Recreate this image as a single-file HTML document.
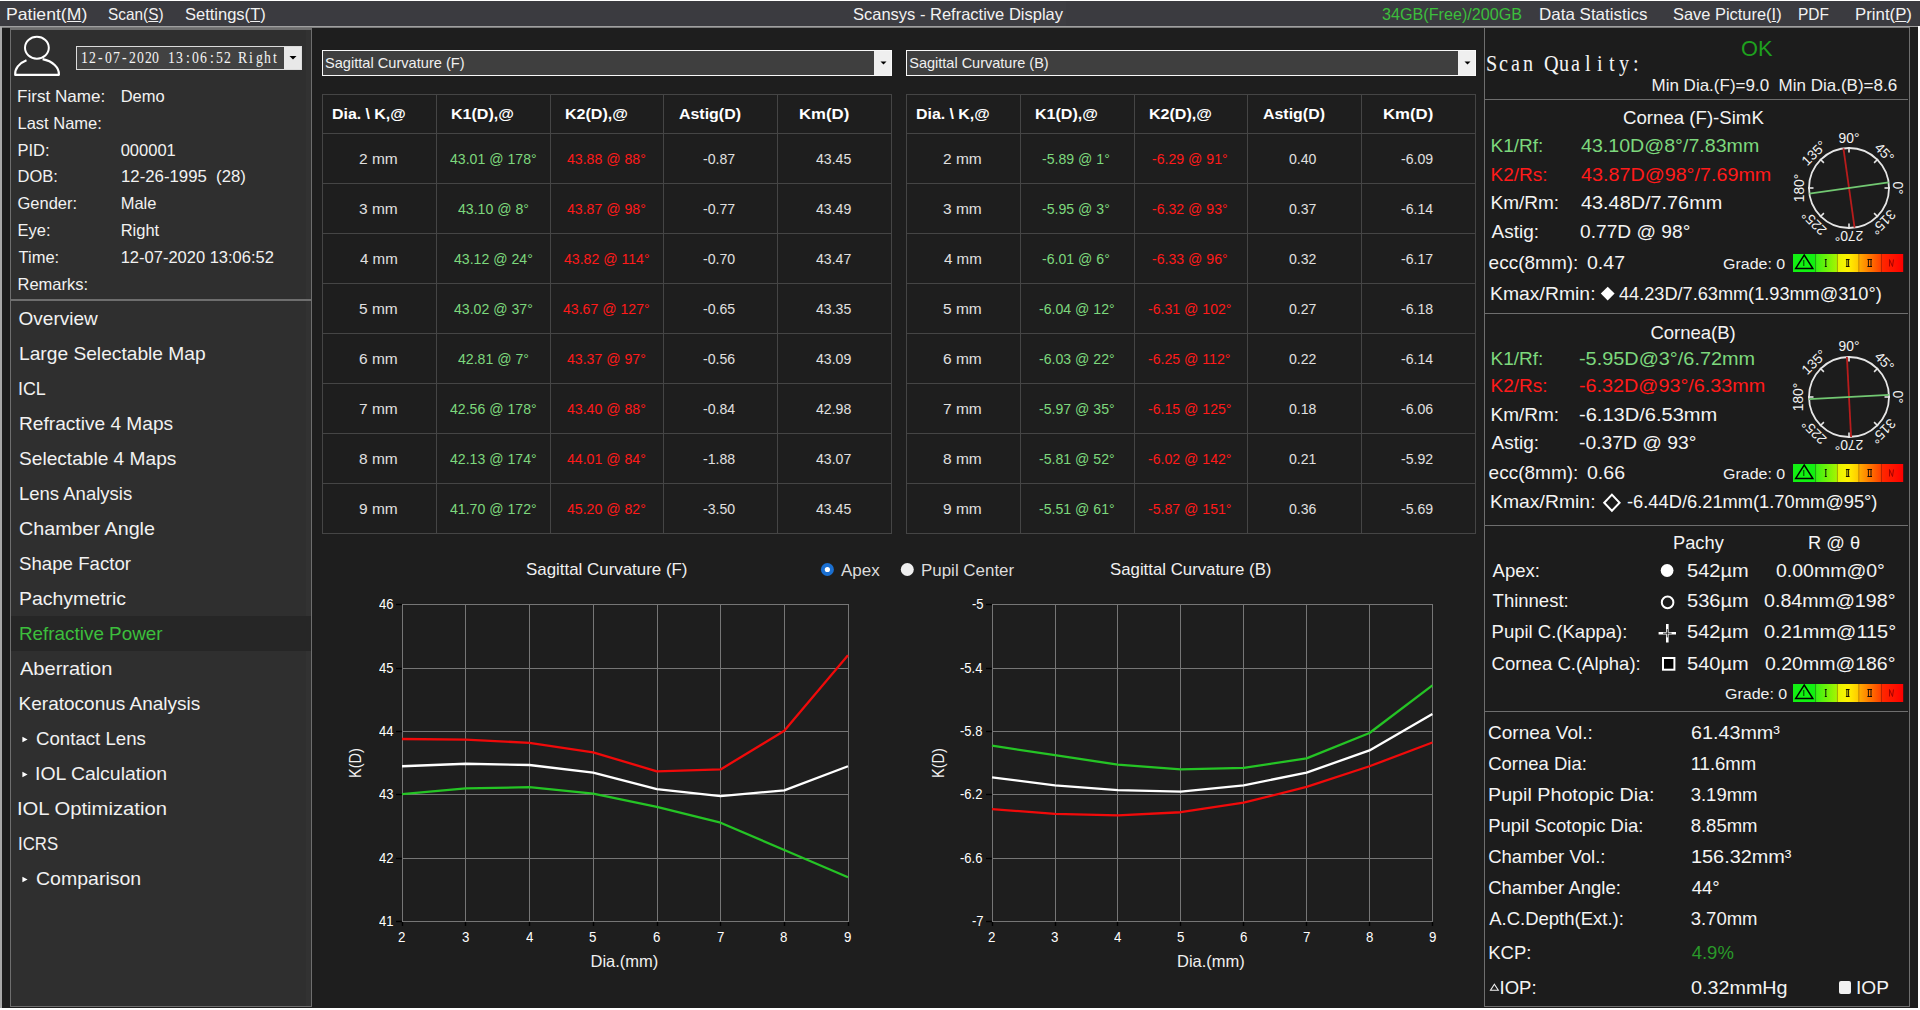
<!DOCTYPE html>
<html><head><meta charset="utf-8"><title>Scansys - Refractive Display</title>
<style>
html,body{margin:0;padding:0;}
body{width:1920px;height:1010px;position:relative;overflow:hidden;background:#ffffff;font-family:"Liberation Sans",sans-serif;}
.t{position:absolute;white-space:pre;}
svg{position:absolute;}
</style></head><body>
<div style="position:absolute;left:0px;top:0px;width:1920px;height:1010px;background:#ffffff;"></div><div style="position:absolute;left:0px;top:26px;width:1918px;height:982px;background:#a9a9a9;"></div><div style="position:absolute;left:2px;top:27px;width:1916px;height:981px;background:#1e1e1e;"></div><div style="position:absolute;left:0px;top:1px;width:1920px;height:25px;background:#3b3b40;"></div><div style="position:absolute;left:0px;top:26px;width:1918px;height:1px;background:#a0a0a0;"></div><div style="position:absolute;left:2px;top:27px;width:1908px;height:1px;background:#7a7a7a;"></div><div style="position:absolute;left:1918px;top:26px;width:2px;height:984px;background:#ffffff;"></div><div style="position:absolute;left:0px;top:1008px;width:1920px;height:2px;background:#ffffff;"></div><div style="position:absolute;left:850px;top:1px;width:216px;height:25px;background:#3d3d42;"></div><div style="position:absolute;left:10px;top:28px;width:302px;height:979px;background:#6e6e6e;"></div><div style="position:absolute;left:11px;top:30px;width:300px;height:976px;background:#2f2f2f;"></div><div style="position:absolute;left:306px;top:30px;width:5px;height:976px;background:#323232;"></div><div style="position:absolute;left:11px;top:299px;width:300px;height:2px;background:#6e6e6e;"></div><div style="position:absolute;left:11px;top:616px;width:300px;height:35px;background:#262626;"></div><svg style="left:0;top:0" width="80" height="90" viewBox="0 0 80 90">
<ellipse cx="36.9" cy="47.8" rx="11.9" ry="11" fill="none" stroke="#ffffff" stroke-width="2"/>
<path d="M26.5 60.3 A22.5 15.5 0 0 0 15.2 74.8 L58.9 74.8 A22.5 15.5 0 0 0 42.6 59.2" fill="none" stroke="#ffffff" stroke-width="2.2" stroke-linejoin="round"/>
</svg><div style="position:absolute;left:76px;top:46px;width:226px;height:24px;background:#dcdcdc;"></div><div style="position:absolute;left:77px;top:47px;width:207px;height:22px;background:#424242;"></div><div style="position:absolute;left:284px;top:47px;width:17px;height:22px;background:#e8e8e8;"></div><svg style="left:289px;top:55px" width="9" height="6"><path d="M0.5 1 L7.5 1 L4 4.5 Z" fill="#000"/></svg><svg style="left:22px;top:735.7px" width="7" height="8"><path d="M0.4 0.8 L5.6 3.5 L0.4 6.2 Z" fill="#ffffff"/></svg><svg style="left:22px;top:770.7px" width="7" height="8"><path d="M0.4 0.8 L5.6 3.5 L0.4 6.2 Z" fill="#ffffff"/></svg><svg style="left:22px;top:875.7px" width="7" height="8"><path d="M0.4 0.8 L5.6 3.5 L0.4 6.2 Z" fill="#ffffff"/></svg><div style="position:absolute;left:322px;top:50px;width:570px;height:26px;background:#f8f8f8;"></div><div style="position:absolute;left:323px;top:51px;width:568px;height:24px;background:#3f3f3f;"></div><div style="position:absolute;left:874px;top:51px;width:17px;height:24px;background:#efefef;"></div><svg style="left:880px;top:61px" width="8" height="5"><path d="M0.5 0.5 L6.5 0.5 L3.5 3.5 Z" fill="#000"/></svg><div style="position:absolute;left:906px;top:50px;width:570px;height:26px;background:#f8f8f8;"></div><div style="position:absolute;left:907px;top:51px;width:568px;height:24px;background:#3f3f3f;"></div><div style="position:absolute;left:1458px;top:51px;width:17px;height:24px;background:#efefef;"></div><svg style="left:1464px;top:61px" width="8" height="5"><path d="M0.5 0.5 L6.5 0.5 L3.5 3.5 Z" fill="#000"/></svg><svg style="left:0;top:0" width="1920" height="600"><line x1="322.5" y1="94" x2="322.5" y2="534" stroke="#454545" stroke-width="1"/><line x1="436.5" y1="94" x2="436.5" y2="534" stroke="#454545" stroke-width="1"/><line x1="550.5" y1="94" x2="550.5" y2="534" stroke="#454545" stroke-width="1"/><line x1="663.5" y1="94" x2="663.5" y2="534" stroke="#454545" stroke-width="1"/><line x1="777.5" y1="94" x2="777.5" y2="534" stroke="#454545" stroke-width="1"/><line x1="891.5" y1="94" x2="891.5" y2="534" stroke="#454545" stroke-width="1"/><line x1="322" y1="94.5" x2="892" y2="94.5" stroke="#454545" stroke-width="1"/><line x1="322" y1="133.5" x2="892" y2="133.5" stroke="#454545" stroke-width="1"/><line x1="322" y1="183.5" x2="892" y2="183.5" stroke="#454545" stroke-width="1"/><line x1="322" y1="233.5" x2="892" y2="233.5" stroke="#454545" stroke-width="1"/><line x1="322" y1="283.5" x2="892" y2="283.5" stroke="#454545" stroke-width="1"/><line x1="322" y1="333.5" x2="892" y2="333.5" stroke="#454545" stroke-width="1"/><line x1="322" y1="383.5" x2="892" y2="383.5" stroke="#454545" stroke-width="1"/><line x1="322" y1="433.5" x2="892" y2="433.5" stroke="#454545" stroke-width="1"/><line x1="322" y1="483.5" x2="892" y2="483.5" stroke="#454545" stroke-width="1"/><line x1="322" y1="533.5" x2="892" y2="533.5" stroke="#454545" stroke-width="1"/></svg><svg style="left:0;top:0" width="1920" height="600"><line x1="906.5" y1="94" x2="906.5" y2="534" stroke="#454545" stroke-width="1"/><line x1="1020.5" y1="94" x2="1020.5" y2="534" stroke="#454545" stroke-width="1"/><line x1="1134.5" y1="94" x2="1134.5" y2="534" stroke="#454545" stroke-width="1"/><line x1="1247.5" y1="94" x2="1247.5" y2="534" stroke="#454545" stroke-width="1"/><line x1="1361.5" y1="94" x2="1361.5" y2="534" stroke="#454545" stroke-width="1"/><line x1="1475.5" y1="94" x2="1475.5" y2="534" stroke="#454545" stroke-width="1"/><line x1="906" y1="94.5" x2="1476" y2="94.5" stroke="#454545" stroke-width="1"/><line x1="906" y1="133.5" x2="1476" y2="133.5" stroke="#454545" stroke-width="1"/><line x1="906" y1="183.5" x2="1476" y2="183.5" stroke="#454545" stroke-width="1"/><line x1="906" y1="233.5" x2="1476" y2="233.5" stroke="#454545" stroke-width="1"/><line x1="906" y1="283.5" x2="1476" y2="283.5" stroke="#454545" stroke-width="1"/><line x1="906" y1="333.5" x2="1476" y2="333.5" stroke="#454545" stroke-width="1"/><line x1="906" y1="383.5" x2="1476" y2="383.5" stroke="#454545" stroke-width="1"/><line x1="906" y1="433.5" x2="1476" y2="433.5" stroke="#454545" stroke-width="1"/><line x1="906" y1="483.5" x2="1476" y2="483.5" stroke="#454545" stroke-width="1"/><line x1="906" y1="533.5" x2="1476" y2="533.5" stroke="#454545" stroke-width="1"/></svg><svg style="left:0;top:0" width="1920" height="1010"><line x1="402.5" y1="604" x2="402.5" y2="922" stroke="#767676" stroke-width="1"/><line x1="402.5" y1="922" x2="402.5" y2="926" stroke="#000" stroke-width="1.4"/><line x1="465.5" y1="604" x2="465.5" y2="922" stroke="#767676" stroke-width="1"/><line x1="465.5" y1="922" x2="465.5" y2="926" stroke="#000" stroke-width="1.4"/><line x1="529.5" y1="604" x2="529.5" y2="922" stroke="#767676" stroke-width="1"/><line x1="529.5" y1="922" x2="529.5" y2="926" stroke="#000" stroke-width="1.4"/><line x1="593.5" y1="604" x2="593.5" y2="922" stroke="#767676" stroke-width="1"/><line x1="593.5" y1="922" x2="593.5" y2="926" stroke="#000" stroke-width="1.4"/><line x1="657.5" y1="604" x2="657.5" y2="922" stroke="#767676" stroke-width="1"/><line x1="657.5" y1="922" x2="657.5" y2="926" stroke="#000" stroke-width="1.4"/><line x1="720.5" y1="604" x2="720.5" y2="922" stroke="#767676" stroke-width="1"/><line x1="720.5" y1="922" x2="720.5" y2="926" stroke="#000" stroke-width="1.4"/><line x1="784.5" y1="604" x2="784.5" y2="922" stroke="#767676" stroke-width="1"/><line x1="784.5" y1="922" x2="784.5" y2="926" stroke="#000" stroke-width="1.4"/><line x1="848.5" y1="604" x2="848.5" y2="922" stroke="#767676" stroke-width="1"/><line x1="848.5" y1="922" x2="848.5" y2="926" stroke="#000" stroke-width="1.4"/><line x1="402" y1="604.5" x2="849" y2="604.5" stroke="#767676" stroke-width="1"/><line x1="396" y1="604.5" x2="402" y2="604.5" stroke="#000" stroke-width="1.4"/><line x1="402" y1="668.5" x2="849" y2="668.5" stroke="#767676" stroke-width="1"/><line x1="396" y1="668.5" x2="402" y2="668.5" stroke="#000" stroke-width="1.4"/><line x1="402" y1="731.5" x2="849" y2="731.5" stroke="#767676" stroke-width="1"/><line x1="396" y1="731.5" x2="402" y2="731.5" stroke="#000" stroke-width="1.4"/><line x1="402" y1="794.5" x2="849" y2="794.5" stroke="#767676" stroke-width="1"/><line x1="396" y1="794.5" x2="402" y2="794.5" stroke="#000" stroke-width="1.4"/><line x1="402" y1="858.5" x2="849" y2="858.5" stroke="#767676" stroke-width="1"/><line x1="396" y1="858.5" x2="402" y2="858.5" stroke="#000" stroke-width="1.4"/><line x1="402" y1="921.5" x2="849" y2="921.5" stroke="#767676" stroke-width="1"/><line x1="396" y1="921.5" x2="402" y2="921.5" stroke="#000" stroke-width="1.4"/><polyline points="402.00,739.01 465.71,739.64 529.43,742.81 593.14,752.32 656.86,771.34 720.57,769.44 784.29,730.77 848.00,655.32" fill="none" stroke="#f00a0a" stroke-width="2.3" stroke-linejoin="round"/><polyline points="402.00,766.27 465.71,763.73 529.43,765.00 593.14,772.61 656.86,789.09 720.57,796.07 784.29,790.36 848.00,766.27" fill="none" stroke="#ffffff" stroke-width="2.3" stroke-linejoin="round"/><polyline points="402.00,794.17 465.71,788.46 529.43,787.19 593.14,793.53 656.86,806.85 720.57,822.70 784.29,849.96 848.00,877.22" fill="none" stroke="#25c425" stroke-width="2.3" stroke-linejoin="round"/></svg><div class=t style="left:325px;top:753.7px;width:60px;height:18px;line-height:18px;text-align:center;font-size:16.5px;color:#f0f0f0;transform:rotate(-90deg) scaleX(0.88);transform-origin:50% 50%">K(D)</div><svg style="left:0;top:0" width="1920" height="1010"><line x1="992.5" y1="604" x2="992.5" y2="922" stroke="#767676" stroke-width="1"/><line x1="992.5" y1="922" x2="992.5" y2="926" stroke="#000" stroke-width="1.4"/><line x1="1055.5" y1="604" x2="1055.5" y2="922" stroke="#767676" stroke-width="1"/><line x1="1055.5" y1="922" x2="1055.5" y2="926" stroke="#000" stroke-width="1.4"/><line x1="1117.5" y1="604" x2="1117.5" y2="922" stroke="#767676" stroke-width="1"/><line x1="1117.5" y1="922" x2="1117.5" y2="926" stroke="#000" stroke-width="1.4"/><line x1="1180.5" y1="604" x2="1180.5" y2="922" stroke="#767676" stroke-width="1"/><line x1="1180.5" y1="922" x2="1180.5" y2="926" stroke="#000" stroke-width="1.4"/><line x1="1243.5" y1="604" x2="1243.5" y2="922" stroke="#767676" stroke-width="1"/><line x1="1243.5" y1="922" x2="1243.5" y2="926" stroke="#000" stroke-width="1.4"/><line x1="1306.5" y1="604" x2="1306.5" y2="922" stroke="#767676" stroke-width="1"/><line x1="1306.5" y1="922" x2="1306.5" y2="926" stroke="#000" stroke-width="1.4"/><line x1="1369.5" y1="604" x2="1369.5" y2="922" stroke="#767676" stroke-width="1"/><line x1="1369.5" y1="922" x2="1369.5" y2="926" stroke="#000" stroke-width="1.4"/><line x1="1432.5" y1="604" x2="1432.5" y2="922" stroke="#767676" stroke-width="1"/><line x1="1432.5" y1="922" x2="1432.5" y2="926" stroke="#000" stroke-width="1.4"/><line x1="992" y1="604.5" x2="1433" y2="604.5" stroke="#767676" stroke-width="1"/><line x1="986" y1="604.5" x2="992" y2="604.5" stroke="#000" stroke-width="1.4"/><line x1="992" y1="668.5" x2="1433" y2="668.5" stroke="#767676" stroke-width="1"/><line x1="986" y1="668.5" x2="992" y2="668.5" stroke="#000" stroke-width="1.4"/><line x1="992" y1="731.5" x2="1433" y2="731.5" stroke="#767676" stroke-width="1"/><line x1="986" y1="731.5" x2="992" y2="731.5" stroke="#000" stroke-width="1.4"/><line x1="992" y1="794.5" x2="1433" y2="794.5" stroke="#767676" stroke-width="1"/><line x1="986" y1="794.5" x2="992" y2="794.5" stroke="#000" stroke-width="1.4"/><line x1="992" y1="858.5" x2="1433" y2="858.5" stroke="#767676" stroke-width="1"/><line x1="986" y1="858.5" x2="992" y2="858.5" stroke="#000" stroke-width="1.4"/><line x1="992" y1="921.5" x2="1433" y2="921.5" stroke="#767676" stroke-width="1"/><line x1="986" y1="921.5" x2="992" y2="921.5" stroke="#000" stroke-width="1.4"/><polyline points="992.00,809.07 1054.91,813.82 1117.83,815.40 1180.74,812.23 1243.66,802.73 1306.57,786.88 1369.49,766.27 1432.40,742.50" fill="none" stroke="#f00a0a" stroke-width="2.3" stroke-linejoin="round"/><polyline points="992.00,777.37 1054.91,785.29 1117.83,790.05 1180.74,791.63 1243.66,785.29 1306.57,772.61 1369.49,750.42 1432.40,713.97" fill="none" stroke="#ffffff" stroke-width="2.3" stroke-linejoin="round"/><polyline points="992.00,745.66 1054.91,755.18 1117.83,764.68 1180.74,769.44 1243.66,767.86 1306.57,758.35 1369.49,732.98 1432.40,685.43" fill="none" stroke="#25c425" stroke-width="2.3" stroke-linejoin="round"/></svg><div class=t style="left:908px;top:753.7px;width:60px;height:18px;line-height:18px;text-align:center;font-size:16.5px;color:#f0f0f0;transform:rotate(-90deg) scaleX(0.88);transform-origin:50% 50%">K(D)</div><svg style="left:810px;top:555px" width="120" height="30">
<circle cx="17.4" cy="14.5" r="6.5" fill="#1a6fd1"/><circle cx="17.4" cy="14.5" r="2.6" fill="#ffffff"/>
<circle cx="97.3" cy="14.5" r="6.5" fill="#efefef"/>
</svg><div style="position:absolute;left:1484px;top:28px;width:426px;height:979px;background:#6e6e6e;"></div><div style="position:absolute;left:1485px;top:28px;width:424px;height:978px;background:#1c1c1c;"></div><div style="position:absolute;left:1485px;top:99px;width:423px;height:1px;background:#6e6e6e;"></div><div style="position:absolute;left:1485px;top:313px;width:423px;height:1px;background:#6e6e6e;"></div><div style="position:absolute;left:1485px;top:525px;width:423px;height:1px;background:#6e6e6e;"></div><div style="position:absolute;left:1485px;top:711px;width:423px;height:1px;background:#6e6e6e;"></div><svg style="left:1792px;top:254.1px" width="112" height="19" viewBox="0 0 112 19">
<defs>
<linearGradient id="g2_1" x1="0" x2="1"><stop offset="0" stop-color="#33f213"/><stop offset="1" stop-color="#a8f400"/></linearGradient>
<linearGradient id="g3_1" x1="0" x2="1"><stop offset="0" stop-color="#e4f500"/><stop offset="0.5" stop-color="#fff200"/><stop offset="1" stop-color="#ffc800"/></linearGradient>
<linearGradient id="g4_1" x1="0" x2="1"><stop offset="0" stop-color="#ffae00"/><stop offset="1" stop-color="#ff3d00"/></linearGradient>
<linearGradient id="g5_1" x1="0" x2="1"><stop offset="0" stop-color="#ff2a00"/><stop offset="1" stop-color="#ff0000"/></linearGradient>
</defs>
<rect x="1" y="0" width="22.6" height="18" fill="#12f012"/>
<rect x="23.6" y="0" width="21.8" height="18" fill="url(#g2_1)"/>
<rect x="45.4" y="0" width="21.5" height="18" fill="url(#g3_1)"/>
<rect x="66.9" y="0" width="22.5" height="18" fill="url(#g4_1)"/>
<rect x="89.4" y="0" width="21.8" height="18" fill="url(#g5_1)"/>
<line x1="23.6" y1="0" x2="23.6" y2="18" stroke="#2a8a10" stroke-width="0.6"/>
<line x1="45.4" y1="0" x2="45.4" y2="18" stroke="#a0a000" stroke-width="0.6"/>
<line x1="66.9" y1="0" x2="66.9" y2="18" stroke="#b07000" stroke-width="0.6"/>
<line x1="89.4" y1="0" x2="89.4" y2="18" stroke="#b02000" stroke-width="0.6"/>
<path d="M12.2 1 L20.9 14.5 L3.6 14.5 Z" fill="none" stroke="#000" stroke-width="1.4" stroke-linejoin="miter"/>
<path d="M11.8 6 L11.8 12" stroke="#000" stroke-width="0.8"/>
<path d="M33.8 5.5 L33.8 12.5 M32.8 5.5 L34.8 5.5 M32.8 12.5 L34.8 12.5" stroke="#000" stroke-width="0.9"/>
<path d="M54.9 5.5 L54.9 12.5 M56.6 5.5 L56.6 12.5 M53.9 5.5 L57.6 5.5 M53.9 12.5 L57.6 12.5" stroke="#000" stroke-width="0.9"/>
<path d="M76.4 5.5 L76.4 12.5 M79 5.5 L79 12.5 M75.4 5.5 L80 5.5 M75.4 12.5 L80 12.5" stroke="#000" stroke-width="0.9"/>
<path d="M97.5 5.5 L97.5 12.5 M97.5 5.5 L100.5 12.5 L101.5 5.5" stroke="#900" stroke-width="0.9" fill="none"/>
</svg><svg style="left:1786.6px;top:125.5px" width="124" height="124" viewBox="1786.6 125.5 124 124"><circle cx="1848.6" cy="187.5" r="40" fill="none" stroke="#e6e6e6" stroke-width="1.8"/><line x1="1884.10" y1="187.50" x2="1889.60" y2="187.50" stroke="#e6e6e6" stroke-width="1.6"/><text x="1896.90" y="187.50" transform="rotate(90 1896.90 187.50)" text-anchor="middle" dominant-baseline="central" font-family="Liberation Sans" font-size="13.8" fill="#f2f2f2">0°</text><line x1="1873.70" y1="162.40" x2="1877.59" y2="158.51" stroke="#e6e6e6" stroke-width="1.6"/><text x="1883.81" y="152.29" transform="rotate(45 1883.81 152.29)" text-anchor="middle" dominant-baseline="central" font-family="Liberation Sans" font-size="13.8" fill="#f2f2f2">45°</text><line x1="1848.60" y1="152.00" x2="1848.60" y2="146.50" stroke="#e6e6e6" stroke-width="1.6"/><text x="1848.60" y="137.50" transform="rotate(0 1848.60 137.50)" text-anchor="middle" dominant-baseline="central" font-family="Liberation Sans" font-size="13.8" fill="#f2f2f2">90°</text><line x1="1823.50" y1="162.40" x2="1819.61" y2="158.51" stroke="#e6e6e6" stroke-width="1.6"/><text x="1813.81" y="152.71" transform="rotate(-45 1813.81 152.71)" text-anchor="middle" dominant-baseline="central" font-family="Liberation Sans" font-size="13.8" fill="#f2f2f2">135°</text><line x1="1813.10" y1="187.50" x2="1807.60" y2="187.50" stroke="#e6e6e6" stroke-width="1.6"/><text x="1798.60" y="187.50" transform="rotate(-90 1798.60 187.50)" text-anchor="middle" dominant-baseline="central" font-family="Liberation Sans" font-size="13.8" fill="#f2f2f2">180°</text><line x1="1823.50" y1="212.60" x2="1819.61" y2="216.49" stroke="#e6e6e6" stroke-width="1.6"/><text x="1813.95" y="222.15" transform="rotate(-135 1813.95 222.15)" text-anchor="middle" dominant-baseline="central" font-family="Liberation Sans" font-size="13.8" fill="#f2f2f2">225°</text><line x1="1848.60" y1="223.00" x2="1848.60" y2="228.50" stroke="#e6e6e6" stroke-width="1.6"/><text x="1848.60" y="234.70" transform="rotate(-180 1848.60 234.70)" text-anchor="middle" dominant-baseline="central" font-family="Liberation Sans" font-size="13.8" fill="#f2f2f2">270°</text><line x1="1873.70" y1="212.60" x2="1877.59" y2="216.49" stroke="#e6e6e6" stroke-width="1.6"/><text x="1882.68" y="221.58" transform="rotate(-225 1882.68 221.58)" text-anchor="middle" dominant-baseline="central" font-family="Liberation Sans" font-size="13.8" fill="#f2f2f2">315°</text><line x1="1843.03" y1="147.89" x2="1854.17" y2="227.11" stroke="#b81c1c" stroke-width="1.8"/><line x1="1888.21" y1="181.93" x2="1808.99" y2="193.07" stroke="#72c872" stroke-width="1.8"/></svg><svg style="left:1600px;top:286px" width="16" height="16"><path d="M7.7 0.8 L14.6 7.6 L7.7 14.4 L0.8 7.6 Z" fill="#ffffff"/></svg><svg style="left:1792px;top:463.8px" width="112" height="19" viewBox="0 0 112 19">
<defs>
<linearGradient id="g2_2" x1="0" x2="1"><stop offset="0" stop-color="#33f213"/><stop offset="1" stop-color="#a8f400"/></linearGradient>
<linearGradient id="g3_2" x1="0" x2="1"><stop offset="0" stop-color="#e4f500"/><stop offset="0.5" stop-color="#fff200"/><stop offset="1" stop-color="#ffc800"/></linearGradient>
<linearGradient id="g4_2" x1="0" x2="1"><stop offset="0" stop-color="#ffae00"/><stop offset="1" stop-color="#ff3d00"/></linearGradient>
<linearGradient id="g5_2" x1="0" x2="1"><stop offset="0" stop-color="#ff2a00"/><stop offset="1" stop-color="#ff0000"/></linearGradient>
</defs>
<rect x="1" y="0" width="22.6" height="18" fill="#12f012"/>
<rect x="23.6" y="0" width="21.8" height="18" fill="url(#g2_2)"/>
<rect x="45.4" y="0" width="21.5" height="18" fill="url(#g3_2)"/>
<rect x="66.9" y="0" width="22.5" height="18" fill="url(#g4_2)"/>
<rect x="89.4" y="0" width="21.8" height="18" fill="url(#g5_2)"/>
<line x1="23.6" y1="0" x2="23.6" y2="18" stroke="#2a8a10" stroke-width="0.6"/>
<line x1="45.4" y1="0" x2="45.4" y2="18" stroke="#a0a000" stroke-width="0.6"/>
<line x1="66.9" y1="0" x2="66.9" y2="18" stroke="#b07000" stroke-width="0.6"/>
<line x1="89.4" y1="0" x2="89.4" y2="18" stroke="#b02000" stroke-width="0.6"/>
<path d="M12.2 1 L20.9 14.5 L3.6 14.5 Z" fill="none" stroke="#000" stroke-width="1.4" stroke-linejoin="miter"/>
<path d="M11.8 6 L11.8 12" stroke="#000" stroke-width="0.8"/>
<path d="M33.8 5.5 L33.8 12.5 M32.8 5.5 L34.8 5.5 M32.8 12.5 L34.8 12.5" stroke="#000" stroke-width="0.9"/>
<path d="M54.9 5.5 L54.9 12.5 M56.6 5.5 L56.6 12.5 M53.9 5.5 L57.6 5.5 M53.9 12.5 L57.6 12.5" stroke="#000" stroke-width="0.9"/>
<path d="M76.4 5.5 L76.4 12.5 M79 5.5 L79 12.5 M75.4 5.5 L80 5.5 M75.4 12.5 L80 12.5" stroke="#000" stroke-width="0.9"/>
<path d="M97.5 5.5 L97.5 12.5 M97.5 5.5 L100.5 12.5 L101.5 5.5" stroke="#900" stroke-width="0.9" fill="none"/>
</svg><svg style="left:1786.6px;top:334.7px" width="124" height="124" viewBox="1786.6 334.7 124 124"><circle cx="1848.6" cy="396.7" r="40" fill="none" stroke="#e6e6e6" stroke-width="1.8"/><line x1="1884.10" y1="396.70" x2="1889.60" y2="396.70" stroke="#e6e6e6" stroke-width="1.6"/><text x="1896.90" y="396.70" transform="rotate(90 1896.90 396.70)" text-anchor="middle" dominant-baseline="central" font-family="Liberation Sans" font-size="13.8" fill="#f2f2f2">0°</text><line x1="1873.70" y1="371.60" x2="1877.59" y2="367.71" stroke="#e6e6e6" stroke-width="1.6"/><text x="1883.81" y="361.49" transform="rotate(45 1883.81 361.49)" text-anchor="middle" dominant-baseline="central" font-family="Liberation Sans" font-size="13.8" fill="#f2f2f2">45°</text><line x1="1848.60" y1="361.20" x2="1848.60" y2="355.70" stroke="#e6e6e6" stroke-width="1.6"/><text x="1848.60" y="346.70" transform="rotate(0 1848.60 346.70)" text-anchor="middle" dominant-baseline="central" font-family="Liberation Sans" font-size="13.8" fill="#f2f2f2">90°</text><line x1="1823.50" y1="371.60" x2="1819.61" y2="367.71" stroke="#e6e6e6" stroke-width="1.6"/><text x="1813.81" y="361.91" transform="rotate(-45 1813.81 361.91)" text-anchor="middle" dominant-baseline="central" font-family="Liberation Sans" font-size="13.8" fill="#f2f2f2">135°</text><line x1="1813.10" y1="396.70" x2="1807.60" y2="396.70" stroke="#e6e6e6" stroke-width="1.6"/><text x="1798.60" y="396.70" transform="rotate(-90 1798.60 396.70)" text-anchor="middle" dominant-baseline="central" font-family="Liberation Sans" font-size="13.8" fill="#f2f2f2">180°</text><line x1="1823.50" y1="421.80" x2="1819.61" y2="425.69" stroke="#e6e6e6" stroke-width="1.6"/><text x="1813.95" y="431.35" transform="rotate(-135 1813.95 431.35)" text-anchor="middle" dominant-baseline="central" font-family="Liberation Sans" font-size="13.8" fill="#f2f2f2">225°</text><line x1="1848.60" y1="432.20" x2="1848.60" y2="437.70" stroke="#e6e6e6" stroke-width="1.6"/><text x="1848.60" y="443.90" transform="rotate(-180 1848.60 443.90)" text-anchor="middle" dominant-baseline="central" font-family="Liberation Sans" font-size="13.8" fill="#f2f2f2">270°</text><line x1="1873.70" y1="421.80" x2="1877.59" y2="425.69" stroke="#e6e6e6" stroke-width="1.6"/><text x="1882.68" y="430.78" transform="rotate(-225 1882.68 430.78)" text-anchor="middle" dominant-baseline="central" font-family="Liberation Sans" font-size="13.8" fill="#f2f2f2">315°</text><line x1="1846.51" y1="356.75" x2="1850.69" y2="436.65" stroke="#b81c1c" stroke-width="1.8"/><line x1="1888.55" y1="394.61" x2="1808.65" y2="398.79" stroke="#72c872" stroke-width="1.8"/></svg><svg style="left:1602px;top:493px" width="20" height="20"><path d="M9.9 1.6 L17.6 9.7 L9.9 17.8 L2.2 9.7 Z" fill="none" stroke="#ffffff" stroke-width="2"/></svg><svg style="left:1650px;top:555px" width="36" height="125" viewBox="1650 555 36 125">
<circle cx="1667.1" cy="570.5" r="6.4" fill="#ffffff"/>
<circle cx="1667.6" cy="602.4" r="5.8" fill="none" stroke="#ffffff" stroke-width="2"/>
<path d="M1658.6 633.2 L1676 633.2 M1667.3 624 L1667.3 642.4" stroke="#ffffff" stroke-width="2.6"/>
<path d="M1663 633.2 L1671.6 633.2 M1667.3 629 L1667.3 637.4" stroke="#000" stroke-width="0.8"/>
<rect x="1663" y="658" width="11.4" height="11.7" fill="#000" stroke="#ffffff" stroke-width="2"/>
</svg><svg style="left:1792px;top:684.0px" width="112" height="19" viewBox="0 0 112 19">
<defs>
<linearGradient id="g2_3" x1="0" x2="1"><stop offset="0" stop-color="#33f213"/><stop offset="1" stop-color="#a8f400"/></linearGradient>
<linearGradient id="g3_3" x1="0" x2="1"><stop offset="0" stop-color="#e4f500"/><stop offset="0.5" stop-color="#fff200"/><stop offset="1" stop-color="#ffc800"/></linearGradient>
<linearGradient id="g4_3" x1="0" x2="1"><stop offset="0" stop-color="#ffae00"/><stop offset="1" stop-color="#ff3d00"/></linearGradient>
<linearGradient id="g5_3" x1="0" x2="1"><stop offset="0" stop-color="#ff2a00"/><stop offset="1" stop-color="#ff0000"/></linearGradient>
</defs>
<rect x="1" y="0" width="22.6" height="18" fill="#12f012"/>
<rect x="23.6" y="0" width="21.8" height="18" fill="url(#g2_3)"/>
<rect x="45.4" y="0" width="21.5" height="18" fill="url(#g3_3)"/>
<rect x="66.9" y="0" width="22.5" height="18" fill="url(#g4_3)"/>
<rect x="89.4" y="0" width="21.8" height="18" fill="url(#g5_3)"/>
<line x1="23.6" y1="0" x2="23.6" y2="18" stroke="#2a8a10" stroke-width="0.6"/>
<line x1="45.4" y1="0" x2="45.4" y2="18" stroke="#a0a000" stroke-width="0.6"/>
<line x1="66.9" y1="0" x2="66.9" y2="18" stroke="#b07000" stroke-width="0.6"/>
<line x1="89.4" y1="0" x2="89.4" y2="18" stroke="#b02000" stroke-width="0.6"/>
<path d="M12.2 1 L20.9 14.5 L3.6 14.5 Z" fill="none" stroke="#000" stroke-width="1.4" stroke-linejoin="miter"/>
<path d="M11.8 6 L11.8 12" stroke="#000" stroke-width="0.8"/>
<path d="M33.8 5.5 L33.8 12.5 M32.8 5.5 L34.8 5.5 M32.8 12.5 L34.8 12.5" stroke="#000" stroke-width="0.9"/>
<path d="M54.9 5.5 L54.9 12.5 M56.6 5.5 L56.6 12.5 M53.9 5.5 L57.6 5.5 M53.9 12.5 L57.6 12.5" stroke="#000" stroke-width="0.9"/>
<path d="M76.4 5.5 L76.4 12.5 M79 5.5 L79 12.5 M75.4 5.5 L80 5.5 M75.4 12.5 L80 12.5" stroke="#000" stroke-width="0.9"/>
<path d="M97.5 5.5 L97.5 12.5 M97.5 5.5 L100.5 12.5 L101.5 5.5" stroke="#900" stroke-width="0.9" fill="none"/>
</svg><div style="position:absolute;left:1838.5px;top:981px;width:12.5px;height:13px;background:#f0f0f0;border-radius:2px;"></div><svg style="left:1489px;top:983px" width="11" height="9"><path d="M5.4 1.3 L9.3 7.3 L1.5 7.3 Z" fill="none" stroke="#f0f0f0" stroke-width="1.1"/></svg>
<div class=t style="left:6.43px;top:5.78px;font-size:16.5px;line-height:16.5px;color:#f2f2f2;transform:scaleX(1.0676);transform-origin:left 0;">Patient(<u>M</u>)</div>
<div class=t style="left:108.07px;top:5.78px;font-size:16.5px;line-height:16.5px;color:#f2f2f2;transform:scaleX(0.9310);transform-origin:left 0;">Scan(<u>S</u>)</div>
<div class=t style="left:185.00px;top:5.78px;font-size:16.5px;line-height:16.5px;color:#f2f2f2;">Settings(<u>T</u>)</div>
<div class=t style="left:853.00px;top:5.78px;font-size:16.5px;line-height:16.5px;color:#f2f2f2;">Scansys - Refractive Display</div>
<div class=t style="left:1382.32px;top:5.78px;font-size:16.5px;line-height:16.5px;color:#3cbf3c;transform:scaleX(0.9787);transform-origin:left 0;">34GB(Free)/200GB</div>
<div class=t style="left:1539.17px;top:5.78px;font-size:16.5px;line-height:16.5px;color:#f2f2f2;transform:scaleX(1.0288);transform-origin:left 0;">Data Statistics</div>
<div class=t style="left:1672.50px;top:5.78px;font-size:16.5px;line-height:16.5px;color:#f2f2f2;transform:scaleX(0.9953);transform-origin:left 0;">Save Picture(<u>I</u>)</div>
<div class=t style="left:1798.06px;top:5.78px;font-size:16.5px;line-height:16.5px;color:#f2f2f2;transform:scaleX(0.9375);transform-origin:left 0;">PDF</div>
<div class=t style="left:1854.78px;top:5.78px;font-size:16.5px;line-height:16.5px;color:#f2f2f2;transform:scaleX(1.0185);transform-origin:left 0;">Print(<u>P</u>)</div>
<div class=t style="left:81.06px;top:50.06px;font-size:16.8px;line-height:16.8px;color:#f4f4f4;font-family:'Liberation Serif',serif;transform:scaleX(0.8200);transform-origin:left 0;">1</div>
<div class=t style="left:88.99px;top:50.06px;font-size:16.8px;line-height:16.8px;color:#f4f4f4;font-family:'Liberation Serif',serif;transform:scaleX(0.8200);transform-origin:left 0;">2</div>
<div class=t style="left:98.15px;top:50.06px;font-size:16.8px;line-height:16.8px;color:#f4f4f4;font-family:'Liberation Serif',serif;transform:scaleX(0.8200);transform-origin:left 0;">-</div>
<div class=t style="left:104.85px;top:50.06px;font-size:16.8px;line-height:16.8px;color:#f4f4f4;font-family:'Liberation Serif',serif;transform:scaleX(0.8200);transform-origin:left 0;">0</div>
<div class=t style="left:112.78px;top:50.06px;font-size:16.8px;line-height:16.8px;color:#f4f4f4;font-family:'Liberation Serif',serif;transform:scaleX(0.8200);transform-origin:left 0;">7</div>
<div class=t style="left:121.94px;top:50.06px;font-size:16.8px;line-height:16.8px;color:#f4f4f4;font-family:'Liberation Serif',serif;transform:scaleX(0.8200);transform-origin:left 0;">-</div>
<div class=t style="left:128.64px;top:50.06px;font-size:16.8px;line-height:16.8px;color:#f4f4f4;font-family:'Liberation Serif',serif;transform:scaleX(0.8200);transform-origin:left 0;">2</div>
<div class=t style="left:136.57px;top:50.06px;font-size:16.8px;line-height:16.8px;color:#f4f4f4;font-family:'Liberation Serif',serif;transform:scaleX(0.8200);transform-origin:left 0;">0</div>
<div class=t style="left:144.50px;top:50.06px;font-size:16.8px;line-height:16.8px;color:#f4f4f4;font-family:'Liberation Serif',serif;transform:scaleX(0.8200);transform-origin:left 0;">2</div>
<div class=t style="left:152.43px;top:50.06px;font-size:16.8px;line-height:16.8px;color:#f4f4f4;font-family:'Liberation Serif',serif;transform:scaleX(0.8200);transform-origin:left 0;">0</div>
<div class=t style="left:168.29px;top:50.06px;font-size:16.8px;line-height:16.8px;color:#f4f4f4;font-family:'Liberation Serif',serif;transform:scaleX(0.8200);transform-origin:left 0;">1</div>
<div class=t style="left:176.22px;top:50.06px;font-size:16.8px;line-height:16.8px;color:#f4f4f4;font-family:'Liberation Serif',serif;transform:scaleX(0.8200);transform-origin:left 0;">3</div>
<div class=t style="left:186.20px;top:50.06px;font-size:16.8px;line-height:16.8px;color:#f4f4f4;font-family:'Liberation Serif',serif;transform:scaleX(0.8200);transform-origin:left 0;">:</div>
<div class=t style="left:192.08px;top:50.06px;font-size:16.8px;line-height:16.8px;color:#f4f4f4;font-family:'Liberation Serif',serif;transform:scaleX(0.8200);transform-origin:left 0;">0</div>
<div class=t style="left:200.01px;top:50.06px;font-size:16.8px;line-height:16.8px;color:#f4f4f4;font-family:'Liberation Serif',serif;transform:scaleX(0.8200);transform-origin:left 0;">6</div>
<div class=t style="left:209.99px;top:50.06px;font-size:16.8px;line-height:16.8px;color:#f4f4f4;font-family:'Liberation Serif',serif;transform:scaleX(0.8200);transform-origin:left 0;">:</div>
<div class=t style="left:215.87px;top:50.06px;font-size:16.8px;line-height:16.8px;color:#f4f4f4;font-family:'Liberation Serif',serif;transform:scaleX(0.8200);transform-origin:left 0;">5</div>
<div class=t style="left:223.80px;top:50.06px;font-size:16.8px;line-height:16.8px;color:#f4f4f4;font-family:'Liberation Serif',serif;transform:scaleX(0.8200);transform-origin:left 0;">2</div>
<div class=t style="left:238.43px;top:50.06px;font-size:16.8px;line-height:16.8px;color:#f4f4f4;font-family:'Liberation Serif',serif;transform:scaleX(0.8200);transform-origin:left 0;">R</div>
<div class=t style="left:249.23px;top:50.06px;font-size:16.8px;line-height:16.8px;color:#f4f4f4;font-family:'Liberation Serif',serif;transform:scaleX(0.8200);transform-origin:left 0;">i</div>
<div class=t style="left:255.52px;top:50.06px;font-size:16.8px;line-height:16.8px;color:#f4f4f4;font-family:'Liberation Serif',serif;transform:scaleX(0.8200);transform-origin:left 0;">g</div>
<div class=t style="left:263.86px;top:50.06px;font-size:16.8px;line-height:16.8px;color:#f4f4f4;font-family:'Liberation Serif',serif;transform:scaleX(0.8200);transform-origin:left 0;">h</div>
<div class=t style="left:273.02px;top:50.06px;font-size:16.8px;line-height:16.8px;color:#f4f4f4;font-family:'Liberation Serif',serif;transform:scaleX(0.8200);transform-origin:left 0;">t</div>
<div class=t style="left:17.46px;top:87.77px;font-size:16.5px;line-height:16.5px;color:#f2f2f2;transform:scaleX(1.0361);transform-origin:left 0;">First Name:</div>
<div class=t style="left:120.70px;top:87.77px;font-size:16.5px;line-height:16.5px;color:#f2f2f2;">Demo</div>
<div class=t style="left:17.50px;top:114.67px;font-size:16.5px;line-height:16.5px;color:#f2f2f2;">Last Name:</div>
<div class=t style="left:17.50px;top:141.57px;font-size:16.5px;line-height:16.5px;color:#f2f2f2;">PID:</div>
<div class=t style="left:120.70px;top:141.57px;font-size:16.5px;line-height:16.5px;color:#f2f2f2;">000001</div>
<div class=t style="left:17.50px;top:168.47px;font-size:16.5px;line-height:16.5px;color:#f2f2f2;">DOB:</div>
<div class=t style="left:120.68px;top:168.47px;font-size:16.5px;line-height:16.5px;color:#f2f2f2;transform:scaleX(1.0165);transform-origin:left 0;">12-26-1995  (28)</div>
<div class=t style="left:17.50px;top:195.37px;font-size:16.5px;line-height:16.5px;color:#f2f2f2;">Gender:</div>
<div class=t style="left:120.70px;top:195.37px;font-size:16.5px;line-height:16.5px;color:#f2f2f2;">Male</div>
<div class=t style="left:17.50px;top:222.28px;font-size:16.5px;line-height:16.5px;color:#f2f2f2;">Eye:</div>
<div class=t style="left:120.70px;top:222.28px;font-size:16.5px;line-height:16.5px;color:#f2f2f2;">Right</div>
<div class=t style="left:18.50px;top:249.17px;font-size:16.5px;line-height:16.5px;color:#f2f2f2;">Time:</div>
<div class=t style="left:120.70px;top:249.17px;font-size:16.5px;line-height:16.5px;color:#f2f2f2;">12-07-2020 13:06:52</div>
<div class=t style="left:17.50px;top:276.07px;font-size:16.5px;line-height:16.5px;color:#f2f2f2;">Remarks:</div>
<div class=t style="left:18.60px;top:308.55px;font-size:19px;line-height:19px;color:#f2f2f2;">Overview</div>
<div class=t style="left:18.59px;top:343.55px;font-size:19px;line-height:19px;color:#f2f2f2;transform:scaleX(1.0098);transform-origin:left 0;">Large Selectable Map</div>
<div class=t style="left:17.72px;top:378.55px;font-size:19px;line-height:19px;color:#f2f2f2;transform:scaleX(0.9407);transform-origin:left 0;">ICL</div>
<div class=t style="left:18.59px;top:413.55px;font-size:19px;line-height:19px;color:#f2f2f2;transform:scaleX(1.0066);transform-origin:left 0;">Refractive 4 Maps</div>
<div class=t style="left:18.59px;top:448.55px;font-size:19px;line-height:19px;color:#f2f2f2;transform:scaleX(1.0065);transform-origin:left 0;">Selectable 4 Maps</div>
<div class=t style="left:18.63px;top:483.55px;font-size:19px;line-height:19px;color:#f2f2f2;transform:scaleX(0.9739);transform-origin:left 0;">Lens Analysis</div>
<div class=t style="left:18.56px;top:518.55px;font-size:19px;line-height:19px;color:#f2f2f2;transform:scaleX(1.0380);transform-origin:left 0;">Chamber Angle</div>
<div class=t style="left:18.62px;top:553.55px;font-size:19px;line-height:19px;color:#f2f2f2;transform:scaleX(0.9823);transform-origin:left 0;">Shape Factor</div>
<div class=t style="left:18.58px;top:588.55px;font-size:19px;line-height:19px;color:#f2f2f2;transform:scaleX(1.0243);transform-origin:left 0;">Pachymetric</div>
<div class=t style="left:18.61px;top:623.55px;font-size:19px;line-height:19px;color:#3cbf3c;transform:scaleX(0.9923);transform-origin:left 0;">Refractive Power</div>
<div class=t style="left:19.60px;top:658.55px;font-size:19px;line-height:19px;color:#f2f2f2;transform:scaleX(1.0540);transform-origin:left 0;">Aberration</div>
<div class=t style="left:18.60px;top:693.55px;font-size:19px;line-height:19px;color:#f2f2f2;">Keratoconus Analysis</div>
<div class=t style="left:35.62px;top:728.55px;font-size:19px;line-height:19px;color:#f2f2f2;transform:scaleX(0.9820);transform-origin:left 0;">Contact Lens</div>
<div class=t style="left:34.56px;top:763.55px;font-size:19px;line-height:19px;color:#f2f2f2;transform:scaleX(1.0222);transform-origin:left 0;">IOL Calculation</div>
<div class=t style="left:17.47px;top:798.55px;font-size:19px;line-height:19px;color:#f2f2f2;transform:scaleX(1.0652);transform-origin:left 0;">IOL Optimization</div>
<div class=t style="left:17.83px;top:833.55px;font-size:19px;line-height:19px;color:#f2f2f2;transform:scaleX(0.8837);transform-origin:left 0;">ICRS</div>
<div class=t style="left:35.57px;top:868.55px;font-size:19px;line-height:19px;color:#f2f2f2;transform:scaleX(1.0270);transform-origin:left 0;">Comparison</div>
<div class=t style="left:325.24px;top:56.08px;font-size:14.5px;line-height:14.5px;color:#f0f0f0;transform:scaleX(1.0073);transform-origin:left 0;">Sagittal Curvature (F)</div>
<div class=t style="left:909.25px;top:56.08px;font-size:14.5px;line-height:14.5px;color:#f0f0f0;">Sagittal Curvature (B)</div>
<div class=t style="left:331.94px;top:106.25px;font-size:15px;line-height:15px;color:#ffffff;font-weight:700;transform:scaleX(1.0588);transform-origin:left 0;">Dia. \ K,@</div>
<div class=t style="left:450.93px;top:106.25px;font-size:15px;line-height:15px;color:#ffffff;font-weight:700;transform:scaleX(1.0702);transform-origin:left 0;">K1(D),@</div>
<div class=t style="left:564.93px;top:106.25px;font-size:15px;line-height:15px;color:#ffffff;font-weight:700;transform:scaleX(1.0702);transform-origin:left 0;">K2(D),@</div>
<div class=t style="left:679.00px;top:106.25px;font-size:15px;line-height:15px;color:#ffffff;font-weight:700;transform:scaleX(1.0621);transform-origin:left 0;">Astig(D)</div>
<div class=t style="left:798.88px;top:106.25px;font-size:15px;line-height:15px;color:#ffffff;font-weight:700;transform:scaleX(1.1163);transform-origin:left 0;">Km(D)</div>
<div class=t style="left:359.00px;top:150.92px;font-size:15.5px;line-height:15.5px;color:#e0e0e0;">2 mm</div>
<div class=t style="left:450.03px;top:150.92px;font-size:15.5px;line-height:15.5px;color:#7dd87d;transform:scaleX(0.9100);transform-origin:left 0;">43.01 @ 178°</div>
<div class=t style="left:567.07px;top:150.92px;font-size:15.5px;line-height:15.5px;color:#ff1a1a;transform:scaleX(0.9100);transform-origin:left 0;">43.88 @ 88°</div>
<div class=t style="left:703.27px;top:150.92px;font-size:15.5px;line-height:15.5px;color:#e0e0e0;transform:scaleX(0.9100);transform-origin:left 0;">-0.87</div>
<div class=t style="left:816.16px;top:150.92px;font-size:15.5px;line-height:15.5px;color:#e0e0e0;transform:scaleX(0.9100);transform-origin:left 0;">43.45</div>
<div class=t style="left:359.00px;top:200.92px;font-size:15.5px;line-height:15.5px;color:#e0e0e0;">3 mm</div>
<div class=t style="left:457.76px;top:200.92px;font-size:15.5px;line-height:15.5px;color:#7dd87d;transform:scaleX(0.9100);transform-origin:left 0;">43.10 @ 8°</div>
<div class=t style="left:567.07px;top:200.92px;font-size:15.5px;line-height:15.5px;color:#ff1a1a;transform:scaleX(0.9100);transform-origin:left 0;">43.87 @ 98°</div>
<div class=t style="left:703.27px;top:200.92px;font-size:15.5px;line-height:15.5px;color:#e0e0e0;transform:scaleX(0.9100);transform-origin:left 0;">-0.77</div>
<div class=t style="left:816.16px;top:200.92px;font-size:15.5px;line-height:15.5px;color:#e0e0e0;transform:scaleX(0.9100);transform-origin:left 0;">43.49</div>
<div class=t style="left:360.00px;top:250.93px;font-size:15.5px;line-height:15.5px;color:#e0e0e0;transform:scaleX(0.9737);transform-origin:left 0;">4 mm</div>
<div class=t style="left:453.67px;top:250.93px;font-size:15.5px;line-height:15.5px;color:#7dd87d;transform:scaleX(0.9100);transform-origin:left 0;">43.12 @ 24°</div>
<div class=t style="left:563.88px;top:250.93px;font-size:15.5px;line-height:15.5px;color:#ff1a1a;transform:scaleX(0.9100);transform-origin:left 0;">43.82 @ 114°</div>
<div class=t style="left:703.27px;top:250.93px;font-size:15.5px;line-height:15.5px;color:#e0e0e0;transform:scaleX(0.9100);transform-origin:left 0;">-0.70</div>
<div class=t style="left:816.16px;top:250.93px;font-size:15.5px;line-height:15.5px;color:#e0e0e0;transform:scaleX(0.9100);transform-origin:left 0;">43.47</div>
<div class=t style="left:359.00px;top:300.93px;font-size:15.5px;line-height:15.5px;color:#e0e0e0;">5 mm</div>
<div class=t style="left:453.67px;top:300.93px;font-size:15.5px;line-height:15.5px;color:#7dd87d;transform:scaleX(0.9100);transform-origin:left 0;">43.02 @ 37°</div>
<div class=t style="left:563.43px;top:300.93px;font-size:15.5px;line-height:15.5px;color:#ff1a1a;transform:scaleX(0.9100);transform-origin:left 0;">43.67 @ 127°</div>
<div class=t style="left:703.27px;top:300.93px;font-size:15.5px;line-height:15.5px;color:#e0e0e0;transform:scaleX(0.9100);transform-origin:left 0;">-0.65</div>
<div class=t style="left:816.16px;top:300.93px;font-size:15.5px;line-height:15.5px;color:#e0e0e0;transform:scaleX(0.9100);transform-origin:left 0;">43.35</div>
<div class=t style="left:359.00px;top:350.93px;font-size:15.5px;line-height:15.5px;color:#e0e0e0;">6 mm</div>
<div class=t style="left:457.76px;top:350.93px;font-size:15.5px;line-height:15.5px;color:#7dd87d;transform:scaleX(0.9100);transform-origin:left 0;">42.81 @ 7°</div>
<div class=t style="left:567.07px;top:350.93px;font-size:15.5px;line-height:15.5px;color:#ff1a1a;transform:scaleX(0.9100);transform-origin:left 0;">43.37 @ 97°</div>
<div class=t style="left:703.27px;top:350.93px;font-size:15.5px;line-height:15.5px;color:#e0e0e0;transform:scaleX(0.9100);transform-origin:left 0;">-0.56</div>
<div class=t style="left:816.16px;top:350.93px;font-size:15.5px;line-height:15.5px;color:#e0e0e0;transform:scaleX(0.9100);transform-origin:left 0;">43.09</div>
<div class=t style="left:359.00px;top:400.93px;font-size:15.5px;line-height:15.5px;color:#e0e0e0;">7 mm</div>
<div class=t style="left:450.03px;top:400.93px;font-size:15.5px;line-height:15.5px;color:#7dd87d;transform:scaleX(0.9100);transform-origin:left 0;">42.56 @ 178°</div>
<div class=t style="left:567.07px;top:400.93px;font-size:15.5px;line-height:15.5px;color:#ff1a1a;transform:scaleX(0.9100);transform-origin:left 0;">43.40 @ 88°</div>
<div class=t style="left:703.27px;top:400.93px;font-size:15.5px;line-height:15.5px;color:#e0e0e0;transform:scaleX(0.9100);transform-origin:left 0;">-0.84</div>
<div class=t style="left:816.16px;top:400.93px;font-size:15.5px;line-height:15.5px;color:#e0e0e0;transform:scaleX(0.9100);transform-origin:left 0;">42.98</div>
<div class=t style="left:359.00px;top:450.93px;font-size:15.5px;line-height:15.5px;color:#e0e0e0;">8 mm</div>
<div class=t style="left:450.03px;top:450.93px;font-size:15.5px;line-height:15.5px;color:#7dd87d;transform:scaleX(0.9100);transform-origin:left 0;">42.13 @ 174°</div>
<div class=t style="left:567.07px;top:450.93px;font-size:15.5px;line-height:15.5px;color:#ff1a1a;transform:scaleX(0.9100);transform-origin:left 0;">44.01 @ 84°</div>
<div class=t style="left:703.27px;top:450.93px;font-size:15.5px;line-height:15.5px;color:#e0e0e0;transform:scaleX(0.9100);transform-origin:left 0;">-1.88</div>
<div class=t style="left:816.16px;top:450.93px;font-size:15.5px;line-height:15.5px;color:#e0e0e0;transform:scaleX(0.9100);transform-origin:left 0;">43.07</div>
<div class=t style="left:359.00px;top:500.93px;font-size:15.5px;line-height:15.5px;color:#e0e0e0;">9 mm</div>
<div class=t style="left:450.03px;top:500.93px;font-size:15.5px;line-height:15.5px;color:#7dd87d;transform:scaleX(0.9100);transform-origin:left 0;">41.70 @ 172°</div>
<div class=t style="left:567.07px;top:500.93px;font-size:15.5px;line-height:15.5px;color:#ff1a1a;transform:scaleX(0.9100);transform-origin:left 0;">45.20 @ 82°</div>
<div class=t style="left:703.27px;top:500.93px;font-size:15.5px;line-height:15.5px;color:#e0e0e0;transform:scaleX(0.9100);transform-origin:left 0;">-3.50</div>
<div class=t style="left:816.16px;top:500.93px;font-size:15.5px;line-height:15.5px;color:#e0e0e0;transform:scaleX(0.9100);transform-origin:left 0;">43.45</div>
<div class=t style="left:916.44px;top:106.25px;font-size:15px;line-height:15px;color:#ffffff;font-weight:700;transform:scaleX(1.0588);transform-origin:left 0;">Dia. \ K,@</div>
<div class=t style="left:1034.93px;top:106.25px;font-size:15px;line-height:15px;color:#ffffff;font-weight:700;transform:scaleX(1.0702);transform-origin:left 0;">K1(D),@</div>
<div class=t style="left:1148.93px;top:106.25px;font-size:15px;line-height:15px;color:#ffffff;font-weight:700;transform:scaleX(1.0702);transform-origin:left 0;">K2(D),@</div>
<div class=t style="left:1263.00px;top:106.25px;font-size:15px;line-height:15px;color:#ffffff;font-weight:700;transform:scaleX(1.0621);transform-origin:left 0;">Astig(D)</div>
<div class=t style="left:1382.88px;top:106.25px;font-size:15px;line-height:15px;color:#ffffff;font-weight:700;transform:scaleX(1.1163);transform-origin:left 0;">Km(D)</div>
<div class=t style="left:943.00px;top:150.92px;font-size:15.5px;line-height:15.5px;color:#e0e0e0;">2 mm</div>
<div class=t style="left:1042.38px;top:150.92px;font-size:15.5px;line-height:15.5px;color:#7dd87d;transform:scaleX(0.9100);transform-origin:left 0;">-5.89 @ 1°</div>
<div class=t style="left:1151.93px;top:150.92px;font-size:15.5px;line-height:15.5px;color:#ff1a1a;transform:scaleX(0.9100);transform-origin:left 0;">-6.29 @ 91°</div>
<div class=t style="left:1289.10px;top:150.92px;font-size:15.5px;line-height:15.5px;color:#e0e0e0;transform:scaleX(0.9100);transform-origin:left 0;">0.40</div>
<div class=t style="left:1400.82px;top:150.92px;font-size:15.5px;line-height:15.5px;color:#e0e0e0;transform:scaleX(0.9100);transform-origin:left 0;">-6.09</div>
<div class=t style="left:943.00px;top:200.92px;font-size:15.5px;line-height:15.5px;color:#e0e0e0;">3 mm</div>
<div class=t style="left:1042.38px;top:200.92px;font-size:15.5px;line-height:15.5px;color:#7dd87d;transform:scaleX(0.9100);transform-origin:left 0;">-5.95 @ 3°</div>
<div class=t style="left:1151.93px;top:200.92px;font-size:15.5px;line-height:15.5px;color:#ff1a1a;transform:scaleX(0.9100);transform-origin:left 0;">-6.32 @ 93°</div>
<div class=t style="left:1289.10px;top:200.92px;font-size:15.5px;line-height:15.5px;color:#e0e0e0;transform:scaleX(0.9100);transform-origin:left 0;">0.37</div>
<div class=t style="left:1400.82px;top:200.92px;font-size:15.5px;line-height:15.5px;color:#e0e0e0;transform:scaleX(0.9100);transform-origin:left 0;">-6.14</div>
<div class=t style="left:944.00px;top:250.93px;font-size:15.5px;line-height:15.5px;color:#e0e0e0;transform:scaleX(0.9737);transform-origin:left 0;">4 mm</div>
<div class=t style="left:1042.38px;top:250.93px;font-size:15.5px;line-height:15.5px;color:#7dd87d;transform:scaleX(0.9100);transform-origin:left 0;">-6.01 @ 6°</div>
<div class=t style="left:1151.93px;top:250.93px;font-size:15.5px;line-height:15.5px;color:#ff1a1a;transform:scaleX(0.9100);transform-origin:left 0;">-6.33 @ 96°</div>
<div class=t style="left:1289.10px;top:250.93px;font-size:15.5px;line-height:15.5px;color:#e0e0e0;transform:scaleX(0.9100);transform-origin:left 0;">0.32</div>
<div class=t style="left:1400.82px;top:250.93px;font-size:15.5px;line-height:15.5px;color:#e0e0e0;transform:scaleX(0.9100);transform-origin:left 0;">-6.17</div>
<div class=t style="left:943.00px;top:300.93px;font-size:15.5px;line-height:15.5px;color:#e0e0e0;">5 mm</div>
<div class=t style="left:1038.73px;top:300.93px;font-size:15.5px;line-height:15.5px;color:#7dd87d;transform:scaleX(0.9100);transform-origin:left 0;">-6.04 @ 12°</div>
<div class=t style="left:1147.84px;top:300.93px;font-size:15.5px;line-height:15.5px;color:#ff1a1a;transform:scaleX(0.9100);transform-origin:left 0;">-6.31 @ 102°</div>
<div class=t style="left:1289.10px;top:300.93px;font-size:15.5px;line-height:15.5px;color:#e0e0e0;transform:scaleX(0.9100);transform-origin:left 0;">0.27</div>
<div class=t style="left:1400.82px;top:300.93px;font-size:15.5px;line-height:15.5px;color:#e0e0e0;transform:scaleX(0.9100);transform-origin:left 0;">-6.18</div>
<div class=t style="left:943.00px;top:350.93px;font-size:15.5px;line-height:15.5px;color:#e0e0e0;">6 mm</div>
<div class=t style="left:1038.73px;top:350.93px;font-size:15.5px;line-height:15.5px;color:#7dd87d;transform:scaleX(0.9100);transform-origin:left 0;">-6.03 @ 22°</div>
<div class=t style="left:1148.30px;top:350.93px;font-size:15.5px;line-height:15.5px;color:#ff1a1a;transform:scaleX(0.9100);transform-origin:left 0;">-6.25 @ 112°</div>
<div class=t style="left:1289.10px;top:350.93px;font-size:15.5px;line-height:15.5px;color:#e0e0e0;transform:scaleX(0.9100);transform-origin:left 0;">0.22</div>
<div class=t style="left:1400.82px;top:350.93px;font-size:15.5px;line-height:15.5px;color:#e0e0e0;transform:scaleX(0.9100);transform-origin:left 0;">-6.14</div>
<div class=t style="left:943.00px;top:400.93px;font-size:15.5px;line-height:15.5px;color:#e0e0e0;">7 mm</div>
<div class=t style="left:1038.73px;top:400.93px;font-size:15.5px;line-height:15.5px;color:#7dd87d;transform:scaleX(0.9100);transform-origin:left 0;">-5.97 @ 35°</div>
<div class=t style="left:1147.84px;top:400.93px;font-size:15.5px;line-height:15.5px;color:#ff1a1a;transform:scaleX(0.9100);transform-origin:left 0;">-6.15 @ 125°</div>
<div class=t style="left:1289.10px;top:400.93px;font-size:15.5px;line-height:15.5px;color:#e0e0e0;transform:scaleX(0.9100);transform-origin:left 0;">0.18</div>
<div class=t style="left:1400.82px;top:400.93px;font-size:15.5px;line-height:15.5px;color:#e0e0e0;transform:scaleX(0.9100);transform-origin:left 0;">-6.06</div>
<div class=t style="left:943.00px;top:450.93px;font-size:15.5px;line-height:15.5px;color:#e0e0e0;">8 mm</div>
<div class=t style="left:1038.73px;top:450.93px;font-size:15.5px;line-height:15.5px;color:#7dd87d;transform:scaleX(0.9100);transform-origin:left 0;">-5.81 @ 52°</div>
<div class=t style="left:1147.84px;top:450.93px;font-size:15.5px;line-height:15.5px;color:#ff1a1a;transform:scaleX(0.9100);transform-origin:left 0;">-6.02 @ 142°</div>
<div class=t style="left:1289.10px;top:450.93px;font-size:15.5px;line-height:15.5px;color:#e0e0e0;transform:scaleX(0.9100);transform-origin:left 0;">0.21</div>
<div class=t style="left:1400.82px;top:450.93px;font-size:15.5px;line-height:15.5px;color:#e0e0e0;transform:scaleX(0.9100);transform-origin:left 0;">-5.92</div>
<div class=t style="left:943.00px;top:500.93px;font-size:15.5px;line-height:15.5px;color:#e0e0e0;">9 mm</div>
<div class=t style="left:1038.73px;top:500.93px;font-size:15.5px;line-height:15.5px;color:#7dd87d;transform:scaleX(0.9100);transform-origin:left 0;">-5.51 @ 61°</div>
<div class=t style="left:1147.84px;top:500.93px;font-size:15.5px;line-height:15.5px;color:#ff1a1a;transform:scaleX(0.9100);transform-origin:left 0;">-5.87 @ 151°</div>
<div class=t style="left:1289.10px;top:500.93px;font-size:15.5px;line-height:15.5px;color:#e0e0e0;transform:scaleX(0.9100);transform-origin:left 0;">0.36</div>
<div class=t style="left:1400.82px;top:500.93px;font-size:15.5px;line-height:15.5px;color:#e0e0e0;transform:scaleX(0.9100);transform-origin:left 0;">-5.69</div>
<div class=t style="left:378.75px;top:597.10px;font-size:14px;line-height:14px;color:#ffffff;transform:scaleX(0.9300);transform-origin:left 0;">46</div>
<div class=t style="left:378.75px;top:660.50px;font-size:14px;line-height:14px;color:#ffffff;transform:scaleX(0.9300);transform-origin:left 0;">45</div>
<div class=t style="left:378.75px;top:723.90px;font-size:14px;line-height:14px;color:#ffffff;transform:scaleX(0.9300);transform-origin:left 0;">44</div>
<div class=t style="left:378.75px;top:787.30px;font-size:14px;line-height:14px;color:#ffffff;transform:scaleX(0.9300);transform-origin:left 0;">43</div>
<div class=t style="left:378.75px;top:850.70px;font-size:14px;line-height:14px;color:#ffffff;transform:scaleX(0.9300);transform-origin:left 0;">42</div>
<div class=t style="left:378.75px;top:914.10px;font-size:14px;line-height:14px;color:#ffffff;transform:scaleX(0.9300);transform-origin:left 0;">41</div>
<div class=t style="left:398.20px;top:929.70px;font-size:14px;line-height:14px;color:#ffffff;transform:scaleX(0.9500);transform-origin:left 0;">2</div>
<div class=t style="left:461.91px;top:929.70px;font-size:14px;line-height:14px;color:#ffffff;transform:scaleX(0.9500);transform-origin:left 0;">3</div>
<div class=t style="left:525.63px;top:929.70px;font-size:14px;line-height:14px;color:#ffffff;transform:scaleX(0.9500);transform-origin:left 0;">4</div>
<div class=t style="left:589.34px;top:929.70px;font-size:14px;line-height:14px;color:#ffffff;transform:scaleX(0.9500);transform-origin:left 0;">5</div>
<div class=t style="left:653.06px;top:929.70px;font-size:14px;line-height:14px;color:#ffffff;transform:scaleX(0.9500);transform-origin:left 0;">6</div>
<div class=t style="left:716.77px;top:929.70px;font-size:14px;line-height:14px;color:#ffffff;transform:scaleX(0.9500);transform-origin:left 0;">7</div>
<div class=t style="left:780.49px;top:929.70px;font-size:14px;line-height:14px;color:#ffffff;transform:scaleX(0.9500);transform-origin:left 0;">8</div>
<div class=t style="left:844.20px;top:929.70px;font-size:14px;line-height:14px;color:#ffffff;transform:scaleX(0.9500);transform-origin:left 0;">9</div>
<div class=t style="left:525.51px;top:561.25px;font-size:17px;line-height:17px;color:#f0f0f0;transform:scaleX(0.9938);transform-origin:left 0;">Sagittal Curvature (F)</div>
<div class=t style="left:590.50px;top:952.68px;font-size:16.5px;line-height:16.5px;color:#f0f0f0;">Dia.(mm)</div>
<div class=t style="left:971.54px;top:597.10px;font-size:14px;line-height:14px;color:#ffffff;transform:scaleX(0.9300);transform-origin:left 0;">-5</div>
<div class=t style="left:960.38px;top:660.50px;font-size:14px;line-height:14px;color:#ffffff;transform:scaleX(0.9300);transform-origin:left 0;">-5.4</div>
<div class=t style="left:960.38px;top:723.90px;font-size:14px;line-height:14px;color:#ffffff;transform:scaleX(0.9300);transform-origin:left 0;">-5.8</div>
<div class=t style="left:960.38px;top:787.30px;font-size:14px;line-height:14px;color:#ffffff;transform:scaleX(0.9300);transform-origin:left 0;">-6.2</div>
<div class=t style="left:960.38px;top:850.70px;font-size:14px;line-height:14px;color:#ffffff;transform:scaleX(0.9300);transform-origin:left 0;">-6.6</div>
<div class=t style="left:971.54px;top:914.10px;font-size:14px;line-height:14px;color:#ffffff;transform:scaleX(0.9300);transform-origin:left 0;">-7</div>
<div class=t style="left:988.20px;top:929.70px;font-size:14px;line-height:14px;color:#ffffff;transform:scaleX(0.9500);transform-origin:left 0;">2</div>
<div class=t style="left:1051.11px;top:929.70px;font-size:14px;line-height:14px;color:#ffffff;transform:scaleX(0.9500);transform-origin:left 0;">3</div>
<div class=t style="left:1114.03px;top:929.70px;font-size:14px;line-height:14px;color:#ffffff;transform:scaleX(0.9500);transform-origin:left 0;">4</div>
<div class=t style="left:1176.94px;top:929.70px;font-size:14px;line-height:14px;color:#ffffff;transform:scaleX(0.9500);transform-origin:left 0;">5</div>
<div class=t style="left:1239.86px;top:929.70px;font-size:14px;line-height:14px;color:#ffffff;transform:scaleX(0.9500);transform-origin:left 0;">6</div>
<div class=t style="left:1302.77px;top:929.70px;font-size:14px;line-height:14px;color:#ffffff;transform:scaleX(0.9500);transform-origin:left 0;">7</div>
<div class=t style="left:1365.69px;top:929.70px;font-size:14px;line-height:14px;color:#ffffff;transform:scaleX(0.9500);transform-origin:left 0;">8</div>
<div class=t style="left:1428.60px;top:929.70px;font-size:14px;line-height:14px;color:#ffffff;transform:scaleX(0.9500);transform-origin:left 0;">9</div>
<div class=t style="left:1110.01px;top:561.25px;font-size:17px;line-height:17px;color:#f0f0f0;transform:scaleX(0.9877);transform-origin:left 0;">Sagittal Curvature (B)</div>
<div class=t style="left:1177.00px;top:952.68px;font-size:16.5px;line-height:16.5px;color:#f0f0f0;">Dia.(mm)</div>
<div class=t style="left:841.00px;top:561.55px;font-size:17px;line-height:17px;color:#dcdcdc;">Apex</div>
<div class=t style="left:920.70px;top:561.55px;font-size:17px;line-height:17px;color:#dcdcdc;transform:scaleX(0.9957);transform-origin:left 0;">Pupil Center</div>
<div class=t style="left:1485.75px;top:51.85px;font-size:23.8px;line-height:23.8px;color:#f4f4f4;font-family:'Liberation Serif',serif;transform:scaleX(0.8500);transform-origin:left 0;">S</div>
<div class=t style="left:1499.05px;top:51.85px;font-size:23.8px;line-height:23.8px;color:#f4f4f4;font-family:'Liberation Serif',serif;transform:scaleX(0.8500);transform-origin:left 0;">c</div>
<div class=t style="left:1511.07px;top:51.85px;font-size:23.8px;line-height:23.8px;color:#f4f4f4;font-family:'Liberation Serif',serif;transform:scaleX(0.8500);transform-origin:left 0;">a</div>
<div class=t style="left:1522.66px;top:51.85px;font-size:23.8px;line-height:23.8px;color:#f4f4f4;font-family:'Liberation Serif',serif;transform:scaleX(0.8500);transform-origin:left 0;">n</div>
<div class=t style="left:1544.15px;top:51.85px;font-size:23.8px;line-height:23.8px;color:#f4f4f4;font-family:'Liberation Serif',serif;transform:scaleX(0.8500);transform-origin:left 0;">Q</div>
<div class=t style="left:1558.72px;top:51.85px;font-size:23.8px;line-height:23.8px;color:#f4f4f4;font-family:'Liberation Serif',serif;transform:scaleX(0.8500);transform-origin:left 0;">u</div>
<div class=t style="left:1571.17px;top:51.85px;font-size:23.8px;line-height:23.8px;color:#f4f4f4;font-family:'Liberation Serif',serif;transform:scaleX(0.8500);transform-origin:left 0;">a</div>
<div class=t style="left:1584.89px;top:51.85px;font-size:23.8px;line-height:23.8px;color:#f4f4f4;font-family:'Liberation Serif',serif;transform:scaleX(0.8500);transform-origin:left 0;">l</div>
<div class=t style="left:1596.91px;top:51.85px;font-size:23.8px;line-height:23.8px;color:#f4f4f4;font-family:'Liberation Serif',serif;transform:scaleX(0.8500);transform-origin:left 0;">i</div>
<div class=t style="left:1609.35px;top:51.85px;font-size:23.8px;line-height:23.8px;color:#f4f4f4;font-family:'Liberation Serif',serif;transform:scaleX(0.8500);transform-origin:left 0;">t</div>
<div class=t style="left:1618.82px;top:51.85px;font-size:23.8px;line-height:23.8px;color:#f4f4f4;font-family:'Liberation Serif',serif;transform:scaleX(0.8500);transform-origin:left 0;">y</div>
<div class=t style="left:1632.97px;top:51.85px;font-size:23.8px;line-height:23.8px;color:#f4f4f4;font-family:'Liberation Serif',serif;transform:scaleX(0.8500);transform-origin:left 0;">:</div>
<div class=t style="left:1740.51px;top:38.20px;font-size:22px;line-height:22px;color:#1ea01e;transform:scaleX(0.9900);transform-origin:left 0;">OK</div>
<div class=t style="left:1651.50px;top:76.85px;font-size:17px;line-height:17px;color:#f0f0f0;">Min Dia.(F)=9.0  Min Dia.(B)=8.6</div>
<div class=t style="left:1623.39px;top:108.78px;font-size:18.5px;line-height:18.5px;color:#f4f4f4;transform:scaleX(1.0072);transform-origin:left 0;">Cornea (F)-SimK</div>
<div class=t style="left:1490.50px;top:136.05px;font-size:19px;line-height:19px;color:#7dd87d;">K1/Rf:</div>
<div class=t style="left:1580.80px;top:136.05px;font-size:19px;line-height:19px;color:#7dd87d;transform:scaleX(1.0326);transform-origin:left 0;">43.10D@8°/7.83mm</div>
<div class=t style="left:1490.50px;top:164.55px;font-size:19px;line-height:19px;color:#ff1a1a;">K2/Rs:</div>
<div class=t style="left:1580.80px;top:164.55px;font-size:19px;line-height:19px;color:#ff1a1a;transform:scaleX(1.0385);transform-origin:left 0;">43.87D@98°/7.69mm</div>
<div class=t style="left:1490.50px;top:193.35px;font-size:19px;line-height:19px;color:#f4f4f4;">Km/Rm:</div>
<div class=t style="left:1580.80px;top:193.35px;font-size:19px;line-height:19px;color:#f4f4f4;transform:scaleX(1.0448);transform-origin:left 0;">43.48D/7.76mm</div>
<div class=t style="left:1491.50px;top:222.45px;font-size:19px;line-height:19px;color:#f4f4f4;">Astig:</div>
<div class=t style="left:1579.79px;top:222.45px;font-size:19px;line-height:19px;color:#f4f4f4;transform:scaleX(1.0093);transform-origin:left 0;">0.77D @ 98°</div>
<div class=t style="left:1488.60px;top:253.45px;font-size:19px;line-height:19px;color:#f4f4f4;">ecc(8mm):</div>
<div class=t style="left:1587.17px;top:253.45px;font-size:19px;line-height:19px;color:#f4f4f4;transform:scaleX(1.0286);transform-origin:left 0;">0.47</div>
<div class=t style="left:1722.97px;top:255.93px;font-size:15.5px;line-height:15.5px;color:#f0f0f0;transform:scaleX(1.0305);transform-origin:left 0;">Grade: 0</div>
<div class=t style="left:1490.48px;top:284.35px;font-size:19px;line-height:19px;color:#f4f4f4;transform:scaleX(1.0198);transform-origin:left 0;">Kmax/Rmin:</div>
<div class=t style="left:1619.30px;top:284.35px;font-size:19px;line-height:19px;color:#f4f4f4;transform:scaleX(0.9551);transform-origin:left 0;">44.23D/7.63mm(1.93mm@310°)</div>
<div class=t style="left:1650.40px;top:324.07px;font-size:18.5px;line-height:18.5px;color:#f4f4f4;">Cornea(B)</div>
<div class=t style="left:1490.50px;top:348.85px;font-size:19px;line-height:19px;color:#7dd87d;">K1/Rf:</div>
<div class=t style="left:1578.75px;top:348.85px;font-size:19px;line-height:19px;color:#7dd87d;transform:scaleX(1.0458);transform-origin:left 0;">-5.95D@3°/6.72mm</div>
<div class=t style="left:1490.50px;top:376.45px;font-size:19px;line-height:19px;color:#ff1a1a;">K2/Rs:</div>
<div class=t style="left:1578.76px;top:376.45px;font-size:19px;line-height:19px;color:#ff1a1a;transform:scaleX(1.0407);transform-origin:left 0;">-6.32D@93°/6.33mm</div>
<div class=t style="left:1490.50px;top:404.85px;font-size:19px;line-height:19px;color:#f4f4f4;">Km/Rm:</div>
<div class=t style="left:1578.74px;top:404.85px;font-size:19px;line-height:19px;color:#f4f4f4;transform:scaleX(1.0558);transform-origin:left 0;">-6.13D/6.53mm</div>
<div class=t style="left:1491.50px;top:432.65px;font-size:19px;line-height:19px;color:#f4f4f4;">Astig:</div>
<div class=t style="left:1578.78px;top:432.65px;font-size:19px;line-height:19px;color:#f4f4f4;transform:scaleX(1.0158);transform-origin:left 0;">-0.37D @ 93°</div>
<div class=t style="left:1488.60px;top:463.15px;font-size:19px;line-height:19px;color:#f4f4f4;">ecc(8mm):</div>
<div class=t style="left:1587.17px;top:463.15px;font-size:19px;line-height:19px;color:#f4f4f4;transform:scaleX(1.0286);transform-origin:left 0;">0.66</div>
<div class=t style="left:1722.97px;top:465.62px;font-size:15.5px;line-height:15.5px;color:#f0f0f0;transform:scaleX(1.0305);transform-origin:left 0;">Grade: 0</div>
<div class=t style="left:1490.48px;top:492.25px;font-size:19px;line-height:19px;color:#f4f4f4;transform:scaleX(1.0198);transform-origin:left 0;">Kmax/Rmin:</div>
<div class=t style="left:1627.04px;top:492.25px;font-size:19px;line-height:19px;color:#f4f4f4;transform:scaleX(0.9624);transform-origin:left 0;">-6.44D/6.21mm(1.70mm@95°)</div>
<div class=t style="left:1672.61px;top:534.07px;font-size:18.5px;line-height:18.5px;color:#f4f4f4;transform:scaleX(0.9882);transform-origin:left 0;">Pachy</div>
<div class=t style="left:1807.91px;top:534.07px;font-size:18.5px;line-height:18.5px;color:#f4f4f4;transform:scaleX(0.9882);transform-origin:left 0;">R @ θ</div>
<div class=t style="left:1492.60px;top:561.57px;font-size:18.5px;line-height:18.5px;color:#f4f4f4;">Apex:</div>
<div class=t style="left:1687.42px;top:561.57px;font-size:18.5px;line-height:18.5px;color:#f4f4f4;transform:scaleX(1.0818);transform-origin:left 0;">542µm</div>
<div class=t style="left:1775.75px;top:561.57px;font-size:18.5px;line-height:18.5px;color:#f4f4f4;transform:scaleX(1.0545);transform-origin:left 0;">0.00mm@0°</div>
<div class=t style="left:1492.60px;top:592.48px;font-size:18.5px;line-height:18.5px;color:#f4f4f4;">Thinnest:</div>
<div class=t style="left:1687.42px;top:592.48px;font-size:18.5px;line-height:18.5px;color:#f4f4f4;transform:scaleX(1.0818);transform-origin:left 0;">536µm</div>
<div class=t style="left:1764.24px;top:592.48px;font-size:18.5px;line-height:18.5px;color:#f4f4f4;transform:scaleX(1.0615);transform-origin:left 0;">0.84mm@198°</div>
<div class=t style="left:1491.60px;top:623.48px;font-size:18.5px;line-height:18.5px;color:#f4f4f4;">Pupil C.(Kappa):</div>
<div class=t style="left:1687.42px;top:623.48px;font-size:18.5px;line-height:18.5px;color:#f4f4f4;transform:scaleX(1.0818);transform-origin:left 0;">542µm</div>
<div class=t style="left:1764.22px;top:623.48px;font-size:18.5px;line-height:18.5px;color:#f4f4f4;transform:scaleX(1.0792);transform-origin:left 0;">0.21mm@115°</div>
<div class=t style="left:1491.60px;top:654.88px;font-size:18.5px;line-height:18.5px;color:#f4f4f4;">Cornea C.(Alpha):</div>
<div class=t style="left:1687.42px;top:654.88px;font-size:18.5px;line-height:18.5px;color:#f4f4f4;transform:scaleX(1.0818);transform-origin:left 0;">540µm</div>
<div class=t style="left:1765.45px;top:654.88px;font-size:18.5px;line-height:18.5px;color:#f4f4f4;transform:scaleX(1.0533);transform-origin:left 0;">0.20mm@186°</div>
<div class=t style="left:1725.37px;top:685.62px;font-size:15.5px;line-height:15.5px;color:#f0f0f0;transform:scaleX(1.0305);transform-origin:left 0;">Grade: 0</div>
<div class=t style="left:1488.17px;top:724.17px;font-size:18.5px;line-height:18.5px;color:#f4f4f4;transform:scaleX(1.0293);transform-origin:left 0;">Cornea Vol.:</div>
<div class=t style="left:1690.63px;top:724.17px;font-size:18.5px;line-height:18.5px;color:#f4f4f4;transform:scaleX(1.0671);transform-origin:left 0;">61.43mm³</div>
<div class=t style="left:1488.20px;top:755.48px;font-size:18.5px;line-height:18.5px;color:#f4f4f4;">Cornea Dia:</div>
<div class=t style="left:1690.70px;top:755.48px;font-size:18.5px;line-height:18.5px;color:#f4f4f4;">11.6mm</div>
<div class=t style="left:1488.14px;top:786.17px;font-size:18.5px;line-height:18.5px;color:#f4f4f4;transform:scaleX(1.0649);transform-origin:left 0;">Pupil Photopic Dia:</div>
<div class=t style="left:1690.70px;top:786.17px;font-size:18.5px;line-height:18.5px;color:#f4f4f4;">3.19mm</div>
<div class=t style="left:1488.20px;top:816.88px;font-size:18.5px;line-height:18.5px;color:#f4f4f4;">Pupil Scotopic Dia:</div>
<div class=t style="left:1690.70px;top:816.88px;font-size:18.5px;line-height:18.5px;color:#f4f4f4;">8.85mm</div>
<div class=t style="left:1488.20px;top:848.48px;font-size:18.5px;line-height:18.5px;color:#f4f4f4;">Chamber Vol.:</div>
<div class=t style="left:1690.63px;top:848.48px;font-size:18.5px;line-height:18.5px;color:#f4f4f4;transform:scaleX(1.0739);transform-origin:left 0;">156.32mm³</div>
<div class=t style="left:1488.20px;top:879.07px;font-size:18.5px;line-height:18.5px;color:#f4f4f4;">Chamber Angle:</div>
<div class=t style="left:1691.70px;top:879.07px;font-size:18.5px;line-height:18.5px;color:#f4f4f4;">44°</div>
<div class=t style="left:1489.20px;top:910.38px;font-size:18.5px;line-height:18.5px;color:#f4f4f4;">A.C.Depth(Ext.):</div>
<div class=t style="left:1690.70px;top:910.38px;font-size:18.5px;line-height:18.5px;color:#f4f4f4;">3.70mm</div>
<div class=t style="left:1488.20px;top:944.17px;font-size:18.5px;line-height:18.5px;color:#f4f4f4;">KCP:</div>
<div class=t style="left:1691.70px;top:944.17px;font-size:18.5px;line-height:18.5px;color:#2a9a2a;">4.9%</div>
<div class=t style="left:1499.60px;top:978.88px;font-size:18.5px;line-height:18.5px;color:#f4f4f4;">IOP:</div>
<div class=t style="left:1690.63px;top:978.88px;font-size:18.5px;line-height:18.5px;color:#f4f4f4;transform:scaleX(1.0674);transform-origin:left 0;">0.32mmHg</div>
<div class=t style="left:1855.93px;top:978.88px;font-size:18.5px;line-height:18.5px;color:#f4f4f4;transform:scaleX(1.0345);transform-origin:left 0;">IOP</div>
</body></html>
